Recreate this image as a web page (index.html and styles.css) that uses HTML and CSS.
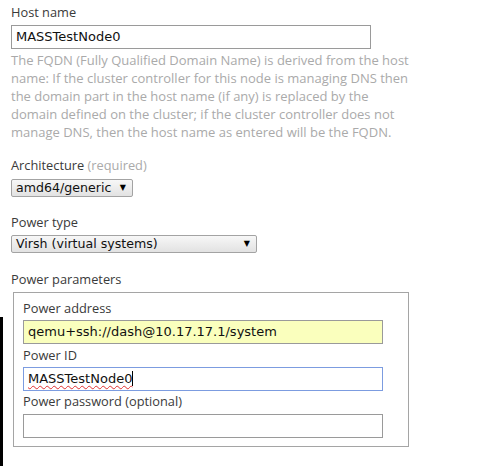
FILE: index.html
```html
<!DOCTYPE html>
<html>
<head>
<meta charset="utf-8">
<link rel="stylesheet" href="styles.css">
</head>
<body>
<div class="edge"></div>
<form class="form">
  <div class="label first">Host name</div>
  <div class="input">MASSTestNode0</div>
  <p class="help">The FQDN (Fully Qualified Domain Name) is derived from the host<br>name: If the cluster controller for this node is managing DNS then<br>the domain part in the host name (if any) is replaced by the<br>domain defined on the cluster; if the cluster controller does not<br>manage DNS, then the host name as entered will be the FQDN.</p>

  <div class="label arch">Architecture <span class="muted">(required)</span></div>
  <div class="select small"><span>amd64/generic</span><span class="arrow">▼</span></div>

  <div class="label ptype">Power type</div>
  <div class="select wide"><span>Virsh (virtual systems)</span><span class="arrow">▼</span></div>

  <div class="label pparams">Power parameters</div>
  <div class="fieldset">
    <div class="label inner">Power address</div>
    <div class="input autofill">qemu+ssh://dash@10.17.17.1/system</div>
    <div class="label inner l2">Power ID</div>
    <div class="input focus"><span class="spell">MASSTestNode0</span><span class="caret"></span></div>
    <div class="label inner l3">Power password (optional)</div>
    <div class="input last"></div>
  </div>
</form>
</body>
</html>
```
FILE: styles.css
```css
html, body {
  margin: 0;
  padding: 0;
  background: #ffffff;
}
body {
  position: relative;
  width: 479px;
  height: 466px;
  overflow: hidden;
  font-family: "Open Sans", "Noto Sans", sans-serif;
  font-size: 12.8px;
  color: #3a3a3a;
}
.edge {
  position: absolute;
  left: 0;
  top: 317px;
  width: 3px;
  height: 149px;
  background: #000;
}
.form {
  padding-left: 11px;
  display: flex;
  flex-direction: column;
  align-items: flex-start;
}
.label {
  line-height: 18px;
  height: 18px;
  white-space: nowrap;
}
.first { margin-top: 3px; }
.muted { color: #aaaaaa; }
.input {
  box-sizing: border-box;
  width: 360px;
  height: 24px;
  border: 1px solid #9a9a9a;
  margin-top: 4px;
  font-family: "DejaVu Sans", sans-serif;
  font-size: 13px;
  line-height: 22px;
  padding-left: 4px;
  color: #111;
  background: #fff;
  white-space: nowrap;
}
.help {
  margin: 2px 0 0 0;
  font-size: 13px;
  line-height: 18px;
  color: #aaaaaa;
  white-space: nowrap;
}
.arch { margin-top: 15px; }
.ptype { margin-top: 16px; }
.pparams { margin-top: 17px; }
.select {
  box-sizing: border-box;
  height: 18px;
  margin-top: 5px;
  border: 1px solid #a3a3a3;
  border-radius: 2px;
  background: linear-gradient(#f7f7f7, #e2e2e2);
  font-family: "DejaVu Sans", sans-serif;
  font-size: 12.6px;
  line-height: 16px;
  color: #111;
  display: flex;
  justify-content: space-between;
  align-items: center;
  padding: 0 6px 0 4px;
}
.select.small { width: 122px; }
.select.wide { width: 246px; margin-top: 4px; }
.arrow {
  font-size: 8px;
  line-height: 16px;
  color: #000;
}
.fieldset {
  box-sizing: border-box;
  margin-top: 4px;
  margin-left: 2px;
  width: 396px;
  border: 1px solid #a5a5a5;
  padding: 6px 0 8px 9px;
}
.inner { margin-top: 0; }
.fieldset .input { margin-top: 3px; }
.l2 { margin-top: 2px; }
.l3 { margin-top: 1px; }
.fieldset .input.last { margin-top: 4px; }
.autofill { background: #faffbd; }
.focus { border-color: #7c9ce0; }
.spell {
  text-decoration: underline wavy #e03030;
  text-decoration-thickness: 1px;
  text-underline-offset: 2px;
}
.caret {
  display: inline-block;
  width: 1px;
  height: 15px;
  background: #000;
  vertical-align: -3px;
}
```
